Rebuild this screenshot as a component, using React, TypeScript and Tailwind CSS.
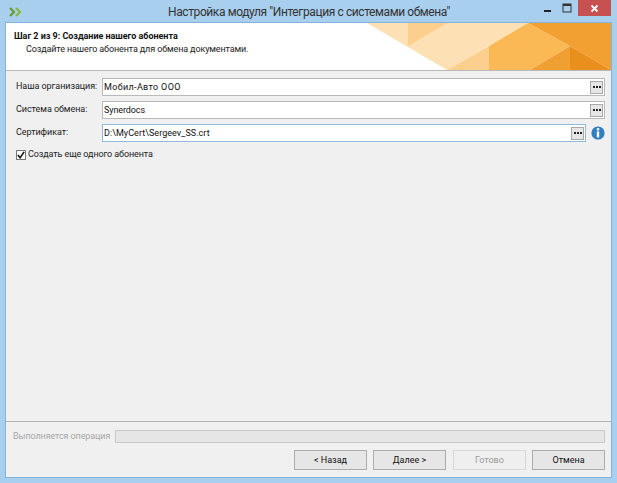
const font = { fontFamily: 'Roboto, "Noto Sans", sans-serif' };

function Dots() {
  return (
    <button className="w-[13px] h-[13px] border border-[#a8a8a8] bg-[#e6e6e6] flex items-center justify-center gap-[1px] shrink-0">
      <span className="w-[2px] h-[2px] bg-[#222]" />
      <span className="w-[2px] h-[2px] bg-[#222]" />
      <span className="w-[2px] h-[2px] bg-[#222]" />
    </button>
  );
}

function Row({ label, value, valueClass, focus, info }: { label: string; value: string; valueClass: string; focus?: boolean; info?: boolean }) {
  return (
    <div className="flex items-center h-[18px]">
      <div className="w-[86px] text-[9px] tracking-[-0.05px] text-[#222] leading-none pb-[2px] shrink-0 whitespace-nowrap">{label}</div>
      <div
        className={
          'flex-1 h-[18px] bg-white border flex items-center justify-between pl-[1px] pr-[1px] ' +
          (focus ? 'border-[#8fbbe0]' : 'border-[#b9b9b9]')
        }
      >
        <span className={'text-[9px] text-[#111] leading-none whitespace-nowrap ' + valueClass}>{value}</span>
        <Dots />
      </div>
      {info && (
        <svg width="14" height="14" viewBox="0 0 14 14" className="ml-[5px] shrink-0">
          <circle cx="7" cy="7" r="6.6" fill="#2f7fc1" />
          <rect x="5.8" y="2.2" width="2.4" height="2.2" fill="#fff" />
          <rect x="5.8" y="5.4" width="2.4" height="6" fill="#fff" />
        </svg>
      )}
    </div>
  );
}

function Btn({ children, disabled }: { children: string; disabled?: boolean }) {
  return (
    <button
      className={
        'w-[73px] h-[20px] border text-[9px] leading-none flex items-center justify-center ' +
        (disabled
          ? 'ml-[1px] border-[#d8d8d8] bg-[#efefef] text-[#9a9a9a]'
          : 'border-[#acacac] bg-[#e6e6e6] text-[#111]')
      }
    >
      {children}
    </button>
  );
}

export default function App() {
  return (
    <div className="w-[617px] h-[483px] bg-[#a9cfee] flex flex-col overflow-hidden" style={font}>
      <div className="h-[23px] flex items-center relative shrink-0">
        <svg width="14" height="10" viewBox="0 0 14 10" className="ml-[9px] mt-[1px]">
          <path d="M1 1 L5 5 L1 9" fill="none" stroke="#6a9a2a" strokeWidth="2.2" />
          <path d="M7 1 L11 5 L7 9" fill="none" stroke="#86b83a" strokeWidth="2.2" />
        </svg>
        <div className="absolute left-[168px] top-[4px] text-[12px] tracking-[-0.4px] leading-[16px] text-[#333] whitespace-nowrap">
          Настройка модуля "Интеграция с системами обмена"
        </div>
        <div className="ml-auto flex items-start self-start mr-[6px]">
          <svg width="10" height="10" viewBox="0 0 10 10" className="mt-[4px] mr-[9px]">
            <rect x="1" y="6" width="7" height="2" fill="#222" />
          </svg>
          <svg width="10" height="10" viewBox="0 0 10 10" className="mt-[3px] mr-[6px]">
            <rect x="1" y="1" width="8" height="8" fill="none" stroke="#333" strokeWidth="1" />
            <rect x="1" y="1" width="8" height="2" fill="#333" />
          </svg>
          <div className="w-[33px] h-[16px] bg-[#c75050] flex items-center justify-center">
            <svg width="9" height="9" viewBox="0 0 9 9">
              <path d="M1.5 1.5 L7.5 7.5 M7.5 1.5 L1.5 7.5" stroke="#fff" strokeWidth="1.8" />
            </svg>
          </div>
        </div>
      </div>

      <div className="mx-[6px] mb-[6px] flex-1 flex flex-col bg-[#f0f0f0] shadow-[0_0_0_1px_#84b4dd]">
        <div className="h-[47px] bg-white flex relative shrink-0">
          <div className="pl-[8px] pt-[7px]">
            <div className="text-[9px] font-bold tracking-[-0.03px] leading-[12px] text-[#111] whitespace-nowrap">
              Шаг 2 из 9: Создание нашего абонента
            </div>
            <div className="text-[9px] tracking-[-0.12px] leading-[12px] mt-[1px] ml-[12px] text-[#222] whitespace-nowrap">
              Создайте нашего абонента для обмена документами.
            </div>
          </div>
          <svg width="244" height="47" viewBox="0 0 244 47" className="ml-auto">
            <polygon points="0,0 161,0 80,47" fill="#fde0b3" />
            <polygon points="41,0 80,0 41,23" fill="#fccf8f" />
            <polygon points="80,47 122,23 122,47" fill="#fccf8f" />
            <polygon points="122,23 161,0 203,23 163,47 122,47" fill="#fbb955" />
            <polygon points="161,0 244,0 244,47 203,23" fill="#f3a033" />
            <polygon points="163,47 203,23 203,47" fill="#f0a032" />
            <polygon points="203,23 244,47 203,47" fill="#e98f1d" />
          </svg>
        </div>
        <div className="h-[1px] bg-[#b8b8b8] shrink-0" />

        <div className="flex-1 flex flex-col px-[10px] pt-[7px] pr-[6px]">
          <div className="flex flex-col gap-[5px]">
            <Row label="Наша организация:" value="Мобил-Авто ООО" valueClass="tracking-[0.35px]" />
            <Row label="Система обмена:" value="Synerdocs" valueClass="tracking-[-0.1px]" />
            <Row label="Сертификат:" value="D:\MyCert\Sergeev_SS.crt" valueClass="tracking-[0.05px]" focus info />
          </div>
          <label className="flex items-center mt-[6px] h-[13px]">
            <span className="w-[10px] h-[10px] bg-white border border-[#777] flex items-center justify-center">
              <svg width="8" height="8" viewBox="0 0 9 9">
                <path d="M1 4.5 L3.5 7.5 L8 1" fill="none" stroke="#111" strokeWidth="1.8" />
              </svg>
            </span>
            <span className="ml-[2px] text-[9px] tracking-[-0.1px] leading-none text-[#222] whitespace-nowrap">
              Создать еще одного абонента
            </span>
          </label>
        </div>

        <div className="h-[1px] bg-[#b4b4b4] shrink-0" />
        <div className="h-[55px] shrink-0 flex flex-col px-[6px] pt-[8px]">
          <div className="flex items-center h-[13px]">
            <span className="w-[103px] pl-[1px] text-[9px] tracking-[-0.1px] leading-none text-[#a8a8a8] whitespace-nowrap">
              Выполняется операция
            </span>
            <div className="flex-1 h-[13px] bg-[#e6e6e6] border border-[#c9c9c9]" />
          </div>
          <div className="flex justify-end gap-[6px] mt-[7px]">
            <Btn>{'< Назад'}</Btn>
            <Btn>{'Далее >'}</Btn>
            <Btn disabled>Готово</Btn>
            <Btn>Отмена</Btn>
          </div>
        </div>
      </div>
    </div>
  );
}
